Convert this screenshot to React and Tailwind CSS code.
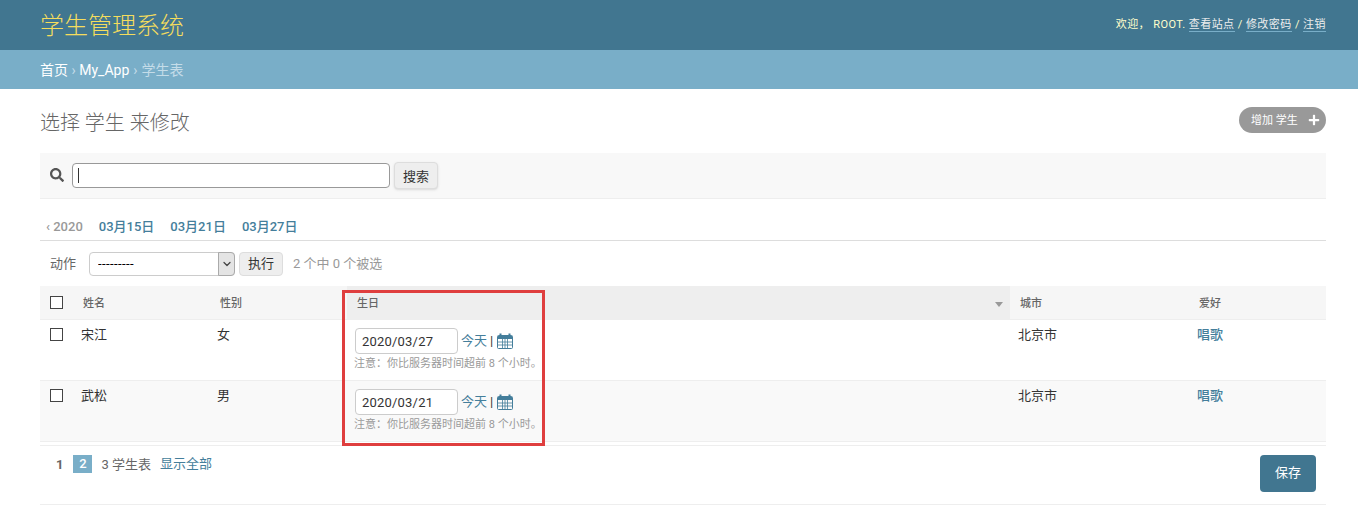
import { ChevronDown } from 'lucide-react';
import { FaPlus, FaSearch } from 'react-icons/fa';

const font = { fontFamily: '"Roboto", "Noto Sans CJK SC", sans-serif' };

const rows = [
  { name: '宋江', sex: '女', date: '2020/03/27', city: '北京市', hobby: '唱歌', bg: 'bg-white' },
  { name: '武松', sex: '男', date: '2020/03/21', city: '北京市', hobby: '唱歌', bg: 'bg-[#f9f9f9]' },
];

function Check() {
  return <input type="checkbox" className="block size-[13px] appearance-none border border-[#444] bg-white" readOnly />;
}

function CalendarIcon() {
  return (
    <svg viewBox="0 0 16 16" className="ml-[1px] size-[16px] text-[#447e9b]" fill="none" stroke="currentColor">
      <rect x="0.5" y="2.5" width="15" height="13" rx="1" />
      <path d="M1 3h14v3H1z" fill="currentColor" stroke="none" />
      <path d="M3.5 .5v3M12.5 .5v3" strokeWidth="2" />
      <path d="M5.5 6v9M8 6v9M10.5 6v9M1 9h14M1 12h14" strokeWidth="0.8" />
    </svg>
  );
}

function Th({ children, className = '' }) {
  return (
    <th className={`h-[33px] p-0 pl-[10px] pt-[3px] text-left text-[11px] font-medium text-[#666] ${className}`}>{children}</th>
  );
}

function Row({ row }) {
  return (
    <tr className={`${row.bg} border-b border-[#eee] align-top`}>
      <td className="pl-[10px] pt-[8px]">
        <Check />
      </td>
      <td className="pl-[8px] pt-[7px] text-[13px] leading-[16px] text-[#333]">{row.name}</td>
      <td className="pl-[7px] pt-[7px] text-[13px] leading-[16px] text-[#333]">{row.sex}</td>
      <td className="pl-[8px] pt-[8px] pb-[10px]">
        <div className="flex items-center gap-[3px]">
          <input
            defaultValue={row.date}
            className="w-[103px] h-[26px] px-[6px] pt-[2px] border border-[#ccc] rounded-[4px] bg-white text-[13px] text-[#333] tracking-[0.2px]"
          />
          <a className="text-[13px] text-[#447e9b]">今天</a>
          <span className="text-[13px] text-[#333]">|</span>
          <CalendarIcon />
        </div>
        <p className="-ml-px mt-[3px] text-[11px] leading-[13px] text-[#999]">注意：你比服务器时间超前 8 个小时。</p>
      </td>
      <td className="pl-[8px] pt-[7px] text-[13px] leading-[16px] text-[#333]">{row.city}</td>
      <td className="pl-[8px] pt-[7px] text-[13px] leading-[16px] font-medium text-[#447e9b]">{row.hobby}</td>
    </tr>
  );
}

export default function App() {
  return (
    <div style={font} className="h-[505px] overflow-hidden bg-white text-[#333]">
      <header className="flex h-[50px] items-center justify-between bg-[#417690] pl-[40px] pr-[32px] pt-[1px]">
        <h1 className="text-[24px] font-light text-[#f5dd5d]">学生管理系统</h1>
        <div className="text-[11px] text-[#ffc] tracking-[0.45px]">
          欢迎， <span className="text-[#ffc]">ROOT.</span>{' '}
          <a className="border-b border-[#79aec8] text-[#eee]">查看站点</a> /{' '}
          <a className="border-b border-[#79aec8] text-[#eee]">修改密码</a> /{' '}
          <a className="border-b border-[#79aec8] text-[#eee]">注销</a>
        </div>
      </header>

      <nav className="flex h-[39px] items-center bg-[#79aec8] px-[40px] pt-[1px] text-[14px] text-white">
        <a>首页</a>
        <span className="mx-[3.5px] text-[#c4dce8]">›</span>
        <a>My_App</a>
        <span className="mx-[4px] text-[#c4dce8]">›</span>
        <span className="text-[#c4dce8]">学生表</span>
      </nav>

      <main className="pl-[40px] pr-[32px]">
        <div className="flex h-[64px] items-center justify-between pt-[4px]">
          <h2 className="text-[20px] font-light text-[#666]">选择 学生 来修改</h2>
          <a className="mb-[6px] flex h-[26px] w-[87px] items-center justify-between rounded-[13px] bg-[#999] pl-[12px] pr-[6px] pt-[2px] text-[11px] text-white">
            增加 学生
            <FaPlus className="-mt-[2px] text-[12px]" />
          </a>
        </div>

        <div className="flex h-[46px] items-center border-b border-[#eee] bg-[#f8f8f8] pb-[1px] pl-[10px]">
          <FaSearch className="mr-[8px] text-[14px] text-[#555]" />
          <div className="relative">
            <input className="block h-[25px] w-[318px] rounded-[4px] border border-[#999] bg-white" />
            <div className="absolute left-[6px] top-[5px] h-[15px] w-px bg-[#333]" />
          </div>
          <button className="ml-[4px] h-[27px] w-[44px] rounded-[4px] border border-[#ddd] bg-[#eee] pt-[3px] text-[13px] text-[#333] shadow-sm">
            搜索
          </button>
        </div>

        <div className="mt-[18px] flex h-[24px] items-start border-b border-[#ddd] pl-[6px] text-[13px] font-medium">
          <span className="text-[#999]">‹ 2020</span>
          <a className="ml-[16px] text-[#447e9b]">03月15日</a>
          <a className="ml-[16px] text-[#447e9b]">03月21日</a>
          <a className="ml-[16px] text-[#447e9b]">03月27日</a>
        </div>

        <div className="flex h-[45px] items-center pl-[10px] text-[13px] text-[#666]">
          <span>动作</span>
          <div className="relative ml-[13px]">
            <select className="block h-[24px] w-[146px] appearance-none rounded-[4px] border border-[#ccc] bg-white pl-[8px] text-[13px] tracking-[0.4px] text-black">
              <option>---------</option>
            </select>
            <div className="absolute right-0 top-0 flex h-[24px] w-[17px] items-center justify-center rounded-r-[4px] border border-[#aaa] bg-[#e4e4e4]">
              <ChevronDown size={12} strokeWidth={2.5} className="text-[#444]" />
            </div>
          </div>
          <button className="ml-[4px] h-[24px] w-[44px] rounded-[4px] border border-[#ddd] bg-[#eee] text-[13px] text-[#333]">
            执行
          </button>
          <span className="ml-[10px] text-[#999]">2 个中 0 个被选</span>
        </div>

        <div className="relative">
          <table className="w-full table-fixed border-collapse border-b border-[#ddd]">
            <colgroup>
              <col className="w-[33px]" />
              <col className="w-[137px]" />
              <col className="w-[137px]" />
              <col className="w-[663px]" />
              <col className="w-[179px]" />
              <col className="w-[137px]" />
            </colgroup>
            <thead>
              <tr className="border-b border-[#eee] bg-[#f6f6f6]">
                <th className="p-0 pl-[10px]">
                  <Check />
                </th>
                <Th>姓名</Th>
                <Th>性别</Th>
                <Th className="bg-[#eeeeee]">
                  <div className="flex items-center justify-between pr-[7px]">
                    生日
                    <span className="mt-[2px] border-x-[4px] border-t-[5px] border-x-transparent border-t-[#999]" />
                  </div>
                </Th>
                <Th>城市</Th>
                <Th>爱好</Th>
              </tr>
            </thead>
            <tbody>
              {rows.map((row) => (
                <Row key={row.name} row={row} />
              ))}
            </tbody>
          </table>

          {/* red box drawn on top of the birthday column */}
          <div className="pointer-events-none absolute left-[302px] top-[4px] h-[156px] w-[203px] border-[3px] border-[#df3e3e]" />
        </div>

        <div className="mt-[3px] flex h-[60px] justify-between border-y border-[#eee]">
          <div className="flex items-start pl-[16px] pt-[9px] text-[13px]">
            <span className="font-bold text-[#666]">1</span>
            <span className="ml-[10px] flex h-[18px] w-[19px] items-center justify-center bg-[#79aec8] font-medium text-white">
              2
            </span>
            <span className="ml-[9px] text-[#666]">3 学生表</span>
            <a className="-mt-px ml-[9px] text-[#447e9b]">显示全部</a>
          </div>
          <button className="mr-[10px] mt-[9px] h-[37px] w-[56px] rounded-[4px] bg-[#417690] text-[13px] text-white">
            保存
          </button>
        </div>
      </main>
    </div>
  );
}
